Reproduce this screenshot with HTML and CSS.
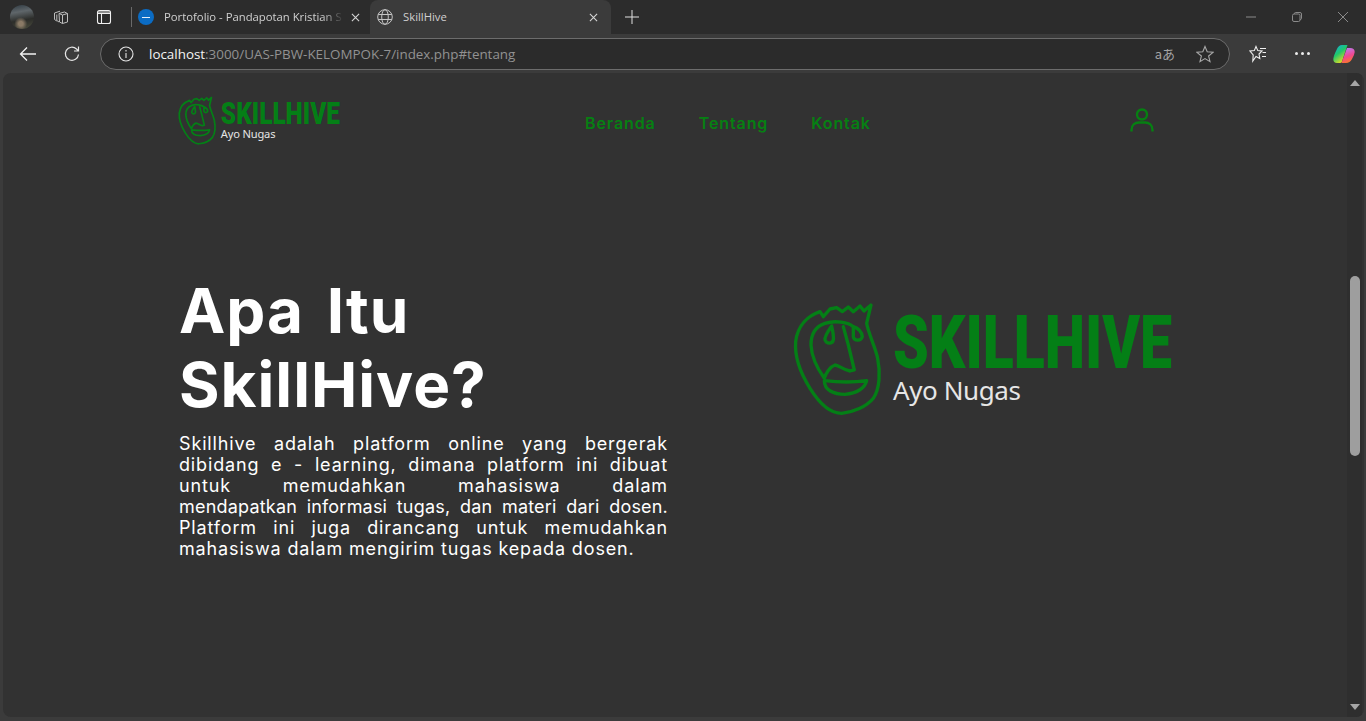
FILE: index.html
```html
<!DOCTYPE html>
<html lang="id">
<head>
<meta charset="utf-8">
<title>SkillHive</title>
<link rel="stylesheet" href="styles.css">
</head>
<body>
<div class="window">
  <div class="tabstrip">
    <div class="avatar"></div>
    <svg class="ico workspaces" viewBox="0 0 18 18"><path d="M7 5.500 12.500 4l3 1.500v8.500l-5 1.500-3-1.500z M10.500 7v8.500 M10.500 7l5-1.500 M7 5.500l3.500 1.500 M4.800 6.500 4.800 12.500 7 14 M2.500 5 2.500 11.500 4.800 13 M2.500 5 8 3.200"/></svg>
    <svg class="ico vtabs" viewBox="0 0 16 16"><rect x="1.500" y="1.500" width="13" height="13" rx="2"/><path class="thick" d="M2 3h12 M2 4.500h12"/><path d="M5.500 4v10"/></svg>
    <span class="sep"></span>
    <div class="tab">
      <span class="favicon"><span class="dash"></span></span>
      <span class="tab-title fade">Portofolio - Pandapotan Kristian S</span>
      <svg class="ico close" viewBox="0 0 10 10"><path d="M1 1l8 8M9 1l-8 8"/></svg>
    </div>
    <div class="tab active">
      <svg class="ico globe" viewBox="0 0 16 16"><circle cx="8" cy="8" r="7.300"/><ellipse cx="8" cy="8" rx="3.300" ry="7.300"/><path d="M1.200 5.500h13.600M1.200 10.500h13.600"/></svg>
      <span class="tab-title">SkillHive</span>
      <svg class="ico close" viewBox="0 0 10 10"><path d="M1 1l8 8M9 1l-8 8"/></svg>
    </div>
    <svg class="ico plus" viewBox="0 0 14 14"><path d="M7 0v14M0 7h14"/></svg>
    <div class="winctl">
      <svg class="ico ctl" viewBox="0 0 10 10"><path d="M0 5h10"/></svg>
      <svg class="ico ctl" viewBox="0 0 10 10"><rect x="0.500" y="2" width="7.500" height="7.500" rx="1.500"/><path d="M2.500 2V1.500Q2.500 .5 3.500 .5H8Q9.500 .5 9.500 2V6.500Q9.500 7.500 8 7.500"/></svg>
      <svg class="ico ctl" viewBox="0 0 10 10"><path d="M0 0l10 10M10 0L0 10"/></svg>
    </div>
  </div>

  <div class="toolbar">
    <svg class="ico back" viewBox="0 0 18 16"><path d="M17 8H1.500M8 1.500 1.500 8 8 14.500"/></svg>
    <svg class="ico reload" viewBox="0 0 18 18"><path d="M15.500 9.500A6.600 6.600 0 1 1 13.500 4L15.500 6M15.500 1.500V6H11"/></svg>
    <div class="address">
      <svg class="ico info" viewBox="0 0 16 16"><circle cx="8" cy="8" r="7"/><path d="M8 7v5M8 4v1.500"/></svg>
      <span class="url"><span class="host">localhost</span>:3000/UAS-PBW-KELOMPOK-7/index.php#tentang</span>
      <span class="translate">aあ</span>
      <svg class="ico star" viewBox="0 0 18 18"><path d="M9 1.500 11.200 6.800 17 7.300 12.600 11 14 16.600 9 13.600 4 16.600 5.400 11 1 7.300 6.800 6.800z"/></svg>
    </div>
    <svg class="ico favs" viewBox="0 0 18 18"><path d="M7 1.500 8.800 5.600 13 6 10 9 10.800 13.500 7 11.500 3.800 16 4.200 10 1 6 5.300 5.600z M11 3.500h6 M13.500 7.500h3.500 M13 11.500h4"/></svg>
    <div class="dots"><i></i><i></i><i></i></div>
    <svg class="copilot" viewBox="0 0 22 20">
      <defs>
        <linearGradient id="cpa" x1="0" y1="0" x2="0.600" y2="1"><stop offset="0" stop-color="#12a8f0"/><stop offset=".5" stop-color="#1fc86a"/><stop offset="1" stop-color="#f0dc20"/></linearGradient>
        <linearGradient id="cpb" x1="0.300" y1="0" x2="0.600" y2="1"><stop offset="0" stop-color="#b97cf5"/><stop offset=".55" stop-color="#f0478f"/><stop offset="1" stop-color="#fb7a22"/></linearGradient>
      </defs>
      <path fill="url(#cpa)" d="M9 1h5.500L9 17.500Q8.500 19 7 19H4Q.3 19 .3 15 .5 12 3.500 6 5.500 1 9 1z"/>
      <path fill="url(#cpb)" d="M13 19H8.500L14 4H17Q21.700 4 21.700 8 21.500 11 19 15 17 19 13 19z"/>
    </svg>
  </div>

  <div class="viewport">
    <main class="page">
      <header class="nav">
        <svg class="logo logo-small" viewBox="0 0 377 112">
          <g class="face" transform="translate(-10 -9) scale(.3333)">
            <path d="M105 50C70 62 38 90 32 140C28 190 50 240 75 280C95 312 130 355 170 355C205 352 245 335 265 310C285 280 286 230 278 190C272 160 250 115 245 85L258 30L237 48L225 33L205 50L190 36L172 50L155 38L135 42L115 65L105 50z"/>
            <path d="M205 95C190 82 150 75 120 85C95 93 78 115 78 150C80 190 100 225 118 250C122 235 135 215 150 210C165 212 175 225 195 228L208 225L190 150L175 95"/>
            <path d="M118 257C160 262 210 262 245 257C240 280 215 295 180 298C145 298 118 285 118 257z"/>
            <path d="M140 93C128 110 118 125 120 135C125 148 142 147 145 135C147 120 142 105 140 93z"/>
            <path d="M205 95L205 125C207 138 228 140 232 125C230 110 220 100 205 95z"/>
          </g>
          <text class="logo-name" x="98" y="64" textLength="279" lengthAdjust="spacingAndGlyphs">SKILLHIVE</text>
          <text class="logo-tag" x="98" y="96" textLength="128" lengthAdjust="spacing">Ayo Nugas</text>
        </svg>
        <nav class="links">
          <a href="#beranda">Beranda</a>
          <a href="#tentang">Tentang</a>
          <a href="#kontak">Kontak</a>
        </nav>
        <svg class="user" viewBox="0 0 24 24"><circle cx="12" cy="6.500" r="5"/><path d="M1.500 23.500V22C1.500 17 5 14.500 9 14.500H15C19 14.500 22.500 17 22.500 22V23.500"/></svg>
      </header>
      <section class="hero">
        <div class="copy">
          <h1>Apa Itu<br>SkillHive?</h1>
          <p><span class="line">Skillhive adalah platform online yang bergerak</span> <span class="line">dibidang e - learning, dimana platform ini dibuat</span> <span class="line">untuk memudahkan mahasiswa dalam</span> <span class="line tight">mendapatkan informasi tugas, dan materi dari dosen.</span> <span class="line">Platform ini juga dirancang untuk memudahkan</span> <span class="line last">mahasiswa dalam mengirim tugas kepada dosen.</span></p>
        </div>
        <svg class="logo logo-big" viewBox="0 0 377 112">
          <g class="face" transform="translate(-10 -9) scale(.3333)">
            <path d="M105 50C70 62 38 90 32 140C28 190 50 240 75 280C95 312 130 355 170 355C205 352 245 335 265 310C285 280 286 230 278 190C272 160 250 115 245 85L258 30L237 48L225 33L205 50L190 36L172 50L155 38L135 42L115 65L105 50z"/>
            <path d="M205 95C190 82 150 75 120 85C95 93 78 115 78 150C80 190 100 225 118 250C122 235 135 215 150 210C165 212 175 225 195 228L208 225L190 150L175 95"/>
            <path d="M118 257C160 262 210 262 245 257C240 280 215 295 180 298C145 298 118 285 118 257z"/>
            <path d="M140 93C128 110 118 125 120 135C125 148 142 147 145 135C147 120 142 105 140 93z"/>
            <path d="M205 95L205 125C207 138 228 140 232 125C230 110 220 100 205 95z"/>
          </g>
          <text class="logo-name" x="98" y="64" textLength="279" lengthAdjust="spacingAndGlyphs">SKILLHIVE</text>
          <text class="logo-tag" x="98" y="96" textLength="128" lengthAdjust="spacing">Ayo Nugas</text>
        </svg>
      </section>
    </main>
    <aside class="scrollbar">
      <span class="arrow up"></span>
      <span class="track"><span class="thumb"></span></span>
      <span class="arrow down"></span>
    </aside>
  </div>
</div>
</body>
</html>
```

FILE: styles.css
```css
* { box-sizing: border-box; }
html, body { margin: 0; height: 100%; overflow: hidden; }
body { background: #3b3b3b; font-family: "Inter", "Liberation Sans", sans-serif; }
.window { display: flex; flex-direction: column; height: 721px; }
.ico { fill: none; stroke: #d6d6d6; stroke-width: 1; flex: none; display: block; }

/* tab strip */
.tabstrip { height: 34px; background: #2c2c2c; display: flex; align-items: center; flex: none; }
.avatar { width: 24px; height: 24px; margin-left: 10px; border-radius: 50%; flex: none;
  background: radial-gradient(circle at 45% 78%, #8a7a66 0 10%, transparent 28%), linear-gradient(170deg, #2f3a42 0%, #5f666a 30%, #2c2d2a 62%, #4d4f3f 100%); }
.workspaces { width: 18px; height: 18px; margin-left: 18px; stroke: #bdbdbd; }
.vtabs { width: 16px; height: 16px; margin-left: 26px; stroke: #f0f0f0; stroke-width: 1.100; }
.vtabs .thick { stroke-width: 1; }
.sep { width: 1px; height: 20px; background: #6a6a6a; margin-left: 19px; flex: none; }
.tab { width: 238px; height: 34px; display: flex; align-items: center; padding-left: 6px; flex: none; }
.tab.active { width: 241px; background: #3b3b3b; border-radius: 8px 8px 0 0; padding-left: 7px; }
.favicon { width: 16px; height: 16px; border-radius: 50%; background: #0b6cc4; display: flex; align-items: center; justify-content: center; flex: none; }
.dash { width: 8px; height: 1px; background: #e6f0fa; }
.tab-title { font: 400 11.300px/16px "Open Sans", sans-serif; color: #d0d0d0; margin-left: 10px; width: 180px; white-space: nowrap; overflow: hidden; flex: none; }
.tab-title.fade { -webkit-mask-image: linear-gradient(90deg, #000 88%, transparent 100%); mask-image: linear-gradient(90deg, #000 88%, transparent 100%); }
.active .tab-title { margin-left: 10px; width: 179px; }
.close { width: 9px; height: 9px; stroke: #d6d6d6; stroke-width: 1.200; }
.tab .close { margin-left: 7px; }
.globe { width: 16px; height: 16px; stroke: #c4c4c4; }
.plus { width: 14px; height: 14px; margin-left: 14px; stroke: #e0e0e0; }
.winctl { margin-left: auto; display: flex; gap: 36px; padding-right: 18px; align-items: center; }
.ctl { width: 10px; height: 10px; stroke: #8a8a8a; }

/* toolbar */
.toolbar { height: 39px; background: #3b3b3b; display: flex; align-items: center; flex: none; }
.back { width: 18px; height: 16px; margin-left: 19px; stroke: #f2f2f2; stroke-width: 1.300; }
.reload { width: 18px; height: 18px; margin-left: 26px; stroke: #e6e6e6; stroke-width: 1.200; }
.address { width: 1130px; height: 32px; margin-left: 19px; background: #2b2b2b; border: 1px solid #6c6c6c; border-radius: 16px; display: flex; align-items: center; padding-left: 17px; flex: none; }
.info { width: 16px; height: 16px; stroke: #e4e4e4; stroke-width: 1.100; }
.url { font: 400 13.400px/18px "Open Sans", sans-serif; color: #929292; margin-left: 15px; white-space: nowrap; }
.host { color: #f4f4f4; }
.translate { font: 400 13px/16px "Noto Sans CJK JP", sans-serif; color: #a4a4a4; margin-left: auto; }
.star { width: 18px; height: 18px; margin-left: 21px; margin-right: 15px; stroke: #a8a8a8; stroke-width: 1.100; }
.favs { width: 18px; height: 18px; margin-left: 19px; stroke: #f0f0f0; stroke-width: 1.100; }
.dots { display: flex; gap: 3px; margin-left: 28px; }
.dots i { width: 3px; height: 3px; background: #ececec; border-radius: 50%; display: block; }
.copilot { width: 22px; height: 20px; margin-left: 23px; flex: none; }

/* viewport */
.viewport { flex: 1; margin: 0 2px 4px 3px; background: #323232; border-radius: 8px; display: flex; overflow: hidden; min-height: 0; }
.page { flex: 1; padding: 24px 0 0 176px; min-width: 0; }
.nav { display: flex; align-items: center; height: 48px; }
.logo-small { width: 161px; height: 48px; flex: none; }
.logo-small .face path { stroke-width: 12; }
.logo-big { width: 377px; height: 112px; flex: none; margin-left: 127px; margin-top: 30px; }
.logo { display: block; overflow: visible; }
.face path { fill: none; stroke: #047f16; stroke-width: 10; stroke-linejoin: round; stroke-linecap: round; }
.logo-name { font: 900 74px "Roboto", sans-serif; fill: #047f16; }
.logo-tag { font: 400 26px "Noto Sans", sans-serif; fill: #e6e6e6; }
.links { display: flex; gap: 43px; margin-left: 245px; margin-top: 3px; }
.links a { font: 600 16px/20px "Inter", sans-serif; color: #068012; text-decoration: none; letter-spacing: .9px; }
.user { width: 24px; height: 26px; margin-left: auto; margin-right: 193px; fill: none; stroke: #068012; stroke-width: 2.400; flex: none; margin-top: -2px; }

.hero { display: flex; align-items: flex-start; margin-top: 129px; }
.copy { width: 489px; flex: none; }
h1 { margin: 0; font: 700 62px/74px "Inter", sans-serif; color: #fff; letter-spacing: 1px; word-spacing: 7px; }
p { margin: 11px 0 0; font: 400 18px/21px "Inter", sans-serif; color: #fff; letter-spacing: .85px; }
.line { display: block; text-align: justify; text-align-last: justify; }
.line.tight { letter-spacing: .2px; word-spacing: -1.500px; }
.line.last { text-align-last: left; }

/* scrollbar */
.scrollbar { width: 15px; background: #2e2e2e; display: flex; flex-direction: column; align-items: center; flex: none; padding: 7px 0 7px; margin-right: 2px; }
.arrow { width: 0; height: 0; border-left: 5px solid transparent; border-right: 5px solid transparent; flex: none; }
.arrow.up { border-bottom: 6px solid #a6a6a6; }
.arrow.down { border-top: 6px solid #a6a6a6; }
.track { flex: 1; width: 100%; padding-top: 190px; display: flex; justify-content: center; }
.thumb { width: 10px; height: 180px; background: #9e9e9e; border-radius: 5px; display: block; }
```
